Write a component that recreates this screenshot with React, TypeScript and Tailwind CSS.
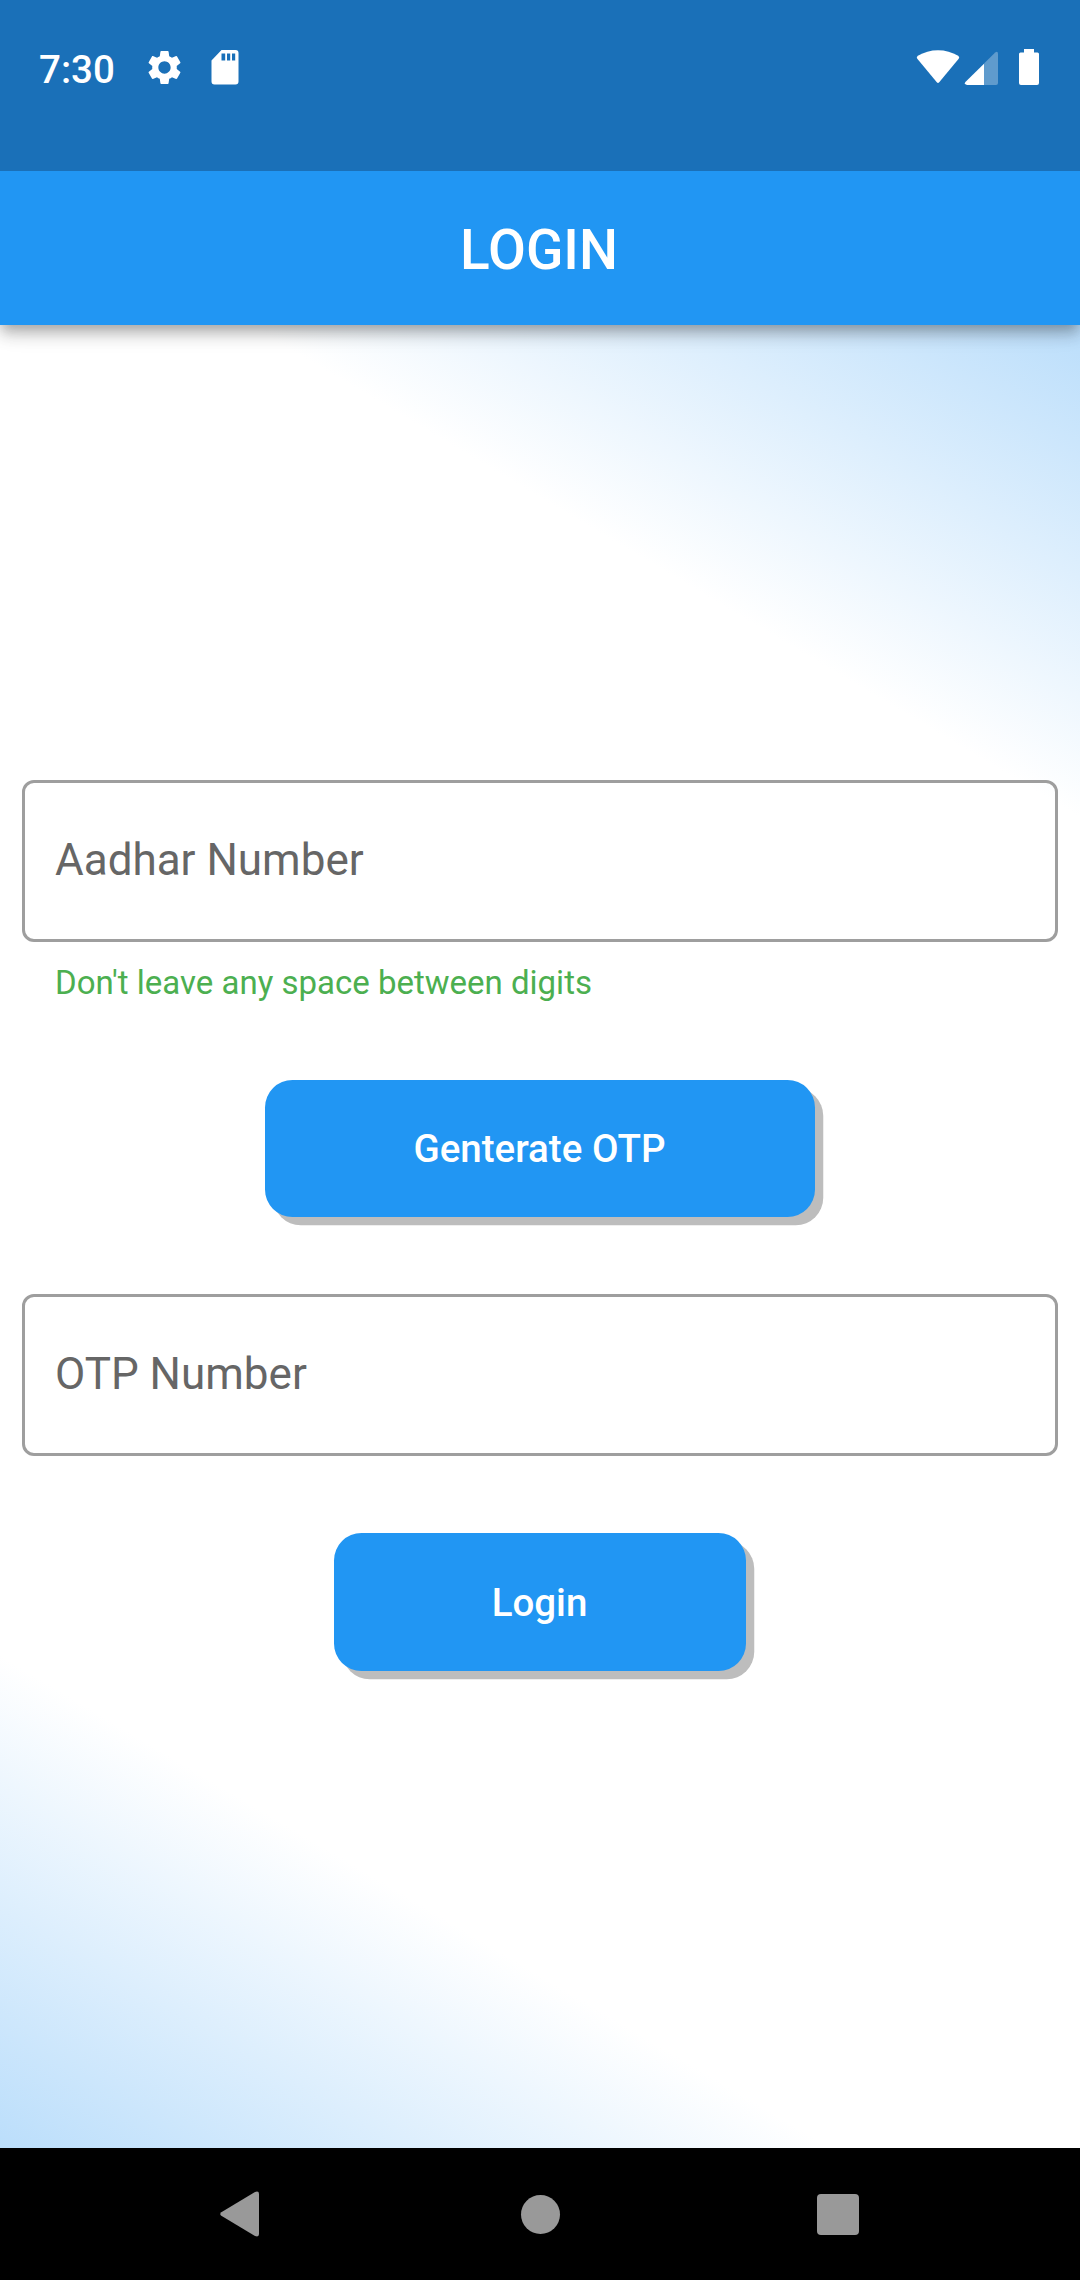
import { MdSettings } from "react-icons/md";

function StatusBar() {
  return (
    <div className="relative z-20 flex h-[171px] items-start justify-between bg-[#1a70b8] pt-[49px] pr-[41px] pl-[39px] text-white">
      <div className="flex h-[36px] items-center">
        <span className="w-[105px] pt-[5px] text-[38.5px] leading-[36px] font-medium">7:30</span>
        <MdSettings className="size-[41px]" />
        <svg className="ml-[26px] h-[36px] w-[28px]" viewBox="0 0 28 36" fill="currentColor">
          <path
            fillRule="evenodd"
            d="M10.5 1H24.5Q27.5 1 27.5 4V32.5Q27.5 35.5 24.5 35.5H3.5Q.5 35.5 .5 32.5V11.5ZM10.5 4.5V11.5H14.2V4.5ZM16 4.5V11.5H19.2V4.5ZM21 4.5V11.5H24.2V4.5Z"
          />
        </svg>
      </div>
      <div className="flex h-[36px] items-start">
        <svg className="h-[36px] w-[44px]" viewBox="0 0 44 36" fill="currentColor">
          <path d="M1.3 9.8Q0 8.2 1.8 6.8Q11 1.2 22 1.2T42.2 6.8Q44 8.2 42.7 9.8L23.2 33.2Q22 34.6 20.8 33.2Z" />
        </svg>
        <svg className="ml-[4px] h-[36px] w-[35px]" viewBox="0 0 35 36" fill="currentColor">
          <path opacity=".3" d="M20 14.5L31.2 3.4Q34 1.8 34 5V34Q34 36 32 36H20Z" />
          <path d="M20 14.7V36H3Q-.2 35.4 1.4 32.9Z" />
        </svg>
        <svg className="ml-[20px] h-[36px] w-[20px]" viewBox="0 0 20 36" fill="currentColor">
          <path d="M5 0H15V3.5H18.5Q20 3.5 20 5V34Q20 36 18 36H2Q0 36 0 34V5Q0 3.5 1.5 3.5H5Z" />
        </svg>
      </div>
    </div>
  );
}

function Field({ label }: { label: string }) {
  return (
    <div className="flex h-[162px] items-center rounded-[12px] border-3 border-[#9e9e9e] px-[30px] pb-[2px]">
      <label className="text-[44px] leading-[52px] text-[#666666]">{label}</label>
    </div>
  );
}

function ActionButton({ label, className }: { label: string; className: string }) {
  return (
    <button
      className={
        "h-[137.5px] self-center rounded-[27.5px] bg-[#2196f3] pt-[2px] pr-[1px] text-[38.5px] leading-[46px] font-medium text-white shadow-[8.25px_8.25px_0_#bdbdbd] " +
        className
      }
    >
      {label}
    </button>
  );
}

function NavigationBar() {
  return (
    <div className="flex h-[132px] items-center bg-black pl-[219px] text-[#999999]">
      <svg className="h-[46px] w-[41px]" viewBox="0 0 41 46" fill="currentColor">
        <path d="M2.3 21.2L36 1Q40 -.6 40 3V43Q40 46.6 36 45L2.3 24.8Q.2 23 2.3 21.2Z" />
      </svg>
      <div className="ml-[261px] size-[39px] rounded-full bg-[#999999]" />
      <div className="mt-[1px] ml-[257px] size-[41.5px] rounded-[4px] bg-[#999999]" />
    </div>
  );
}

export default function App() {
  return (
    <div className="flex h-[2280px] w-[1080px] flex-col overflow-hidden font-['Roboto',sans-serif]">
      <StatusBar />
      <header className="relative z-10 flex h-[154px] items-center justify-center bg-[#2196f3] pt-[3px] pr-[2px] shadow-[0_5.5px_11px_-2.75px_rgba(0,0,0,0.2),0_11px_13.75px_0_rgba(0,0,0,0.14),0_2.75px_27.5px_0_rgba(0,0,0,0.12)]">
        <h1 className="text-[55px] leading-[64px] font-medium text-white">LOGIN</h1>
      </header>
      <main className="flex h-[1823px] flex-col bg-[linear-gradient(210.64deg,#bbdefb_0%,#ffffff_20%,#ffffff_80%,#bbdefb_100%)] px-[22px] pt-[455px]">
        <Field label="Aadhar Number" />
        <p className="mt-[21px] pl-[33px] text-[33px] leading-[39px] text-[#4caf50]">Don't leave any space between digits</p>
        <ActionButton label="Genterate OTP" className="mt-[77.5px] mb-[77px] w-[550px]" />
        <Field label="OTP Number" />
        <ActionButton label="Login" className="mt-[77px] w-[412.5px]" />
      </main>
      <NavigationBar />
    </div>
  );
}
